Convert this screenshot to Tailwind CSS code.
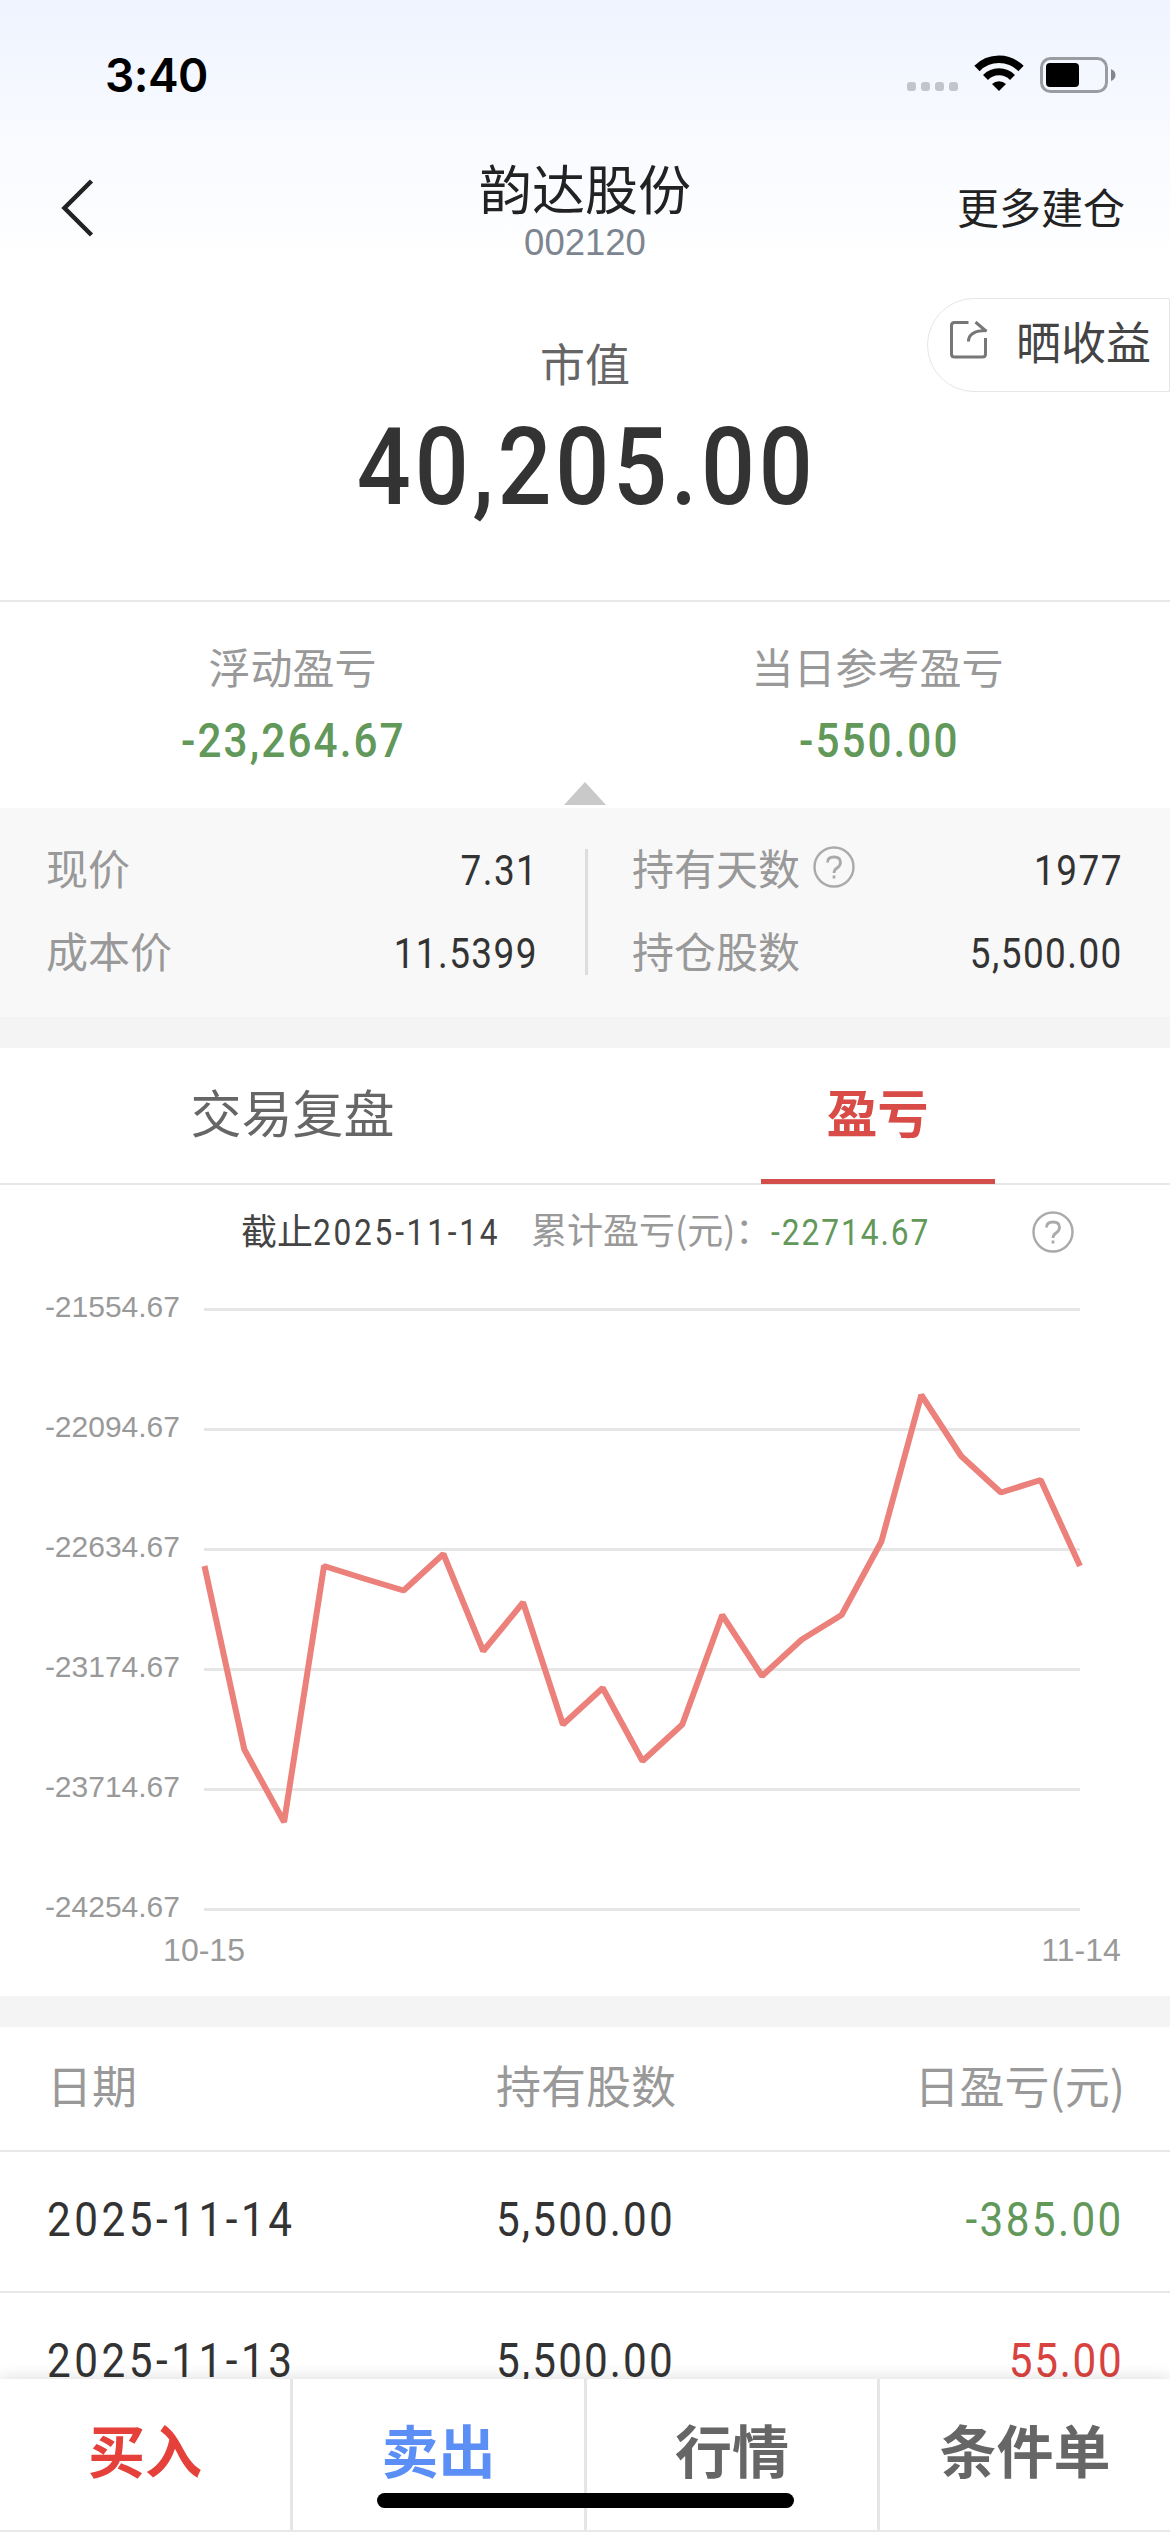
<!DOCTYPE html>
<html lang="zh-CN">
<head>
    <meta charset="UTF-8">
    <meta name="viewport" content="width=device-width, initial-scale=1.0">
    <title>韵达股份 - 持仓详情</title>
    <script src="https://cdn.jsdelivr.net/npm/@tailwindcss/browser@4"></script>
</head>
<body class="bg-white font-['Noto_Sans_CJK_SC',sans-serif]">
<div class="relative w-[1170px] h-[2532px] overflow-hidden bg-white">

    <header class="h-[267px] bg-linear-to-b from-[#eff4ff] via-[#f8faff] to-white">
        <!-- status bar -->
        <div class="flex h-[149px] items-center justify-between pl-[105px] pr-[54px]">
            <span class="font-['Inter',sans-serif] text-[46px] leading-[46px] font-semibold tracking-[-0.5px] text-black">3:40</span>
            <div class="flex items-center">
                <div class="mt-6 flex gap-[5px]">
                    <span class="h-[9px] w-[9px] rounded-[3px] bg-[#c4c5cb]"></span>
                    <span class="h-[9px] w-[9px] rounded-[3px] bg-[#c4c5cb]"></span>
                    <span class="h-[9px] w-[9px] rounded-[3px] bg-[#c4c5cb]"></span>
                    <span class="h-[9px] w-[9px] rounded-[3px] bg-[#c4c5cb]"></span>
                </div>
                <svg class="mr-4 mb-[2px] ml-4 h-[37px] w-[50px]" viewBox="0 0 50 37" fill="none">
                    <path d="M3 13.5 A31 31 0 0 1 47 13.5" stroke="#000" stroke-width="7.5" />
                    <path d="M11.5 22.5 A19 19 0 0 1 38.5 22.5" stroke="#000" stroke-width="7" />
                    <path d="M25 36 L18 29 A10 10 0 0 1 32 29 Z" fill="#000" />
                </svg>
                <svg class="h-[36px] w-[76px]" viewBox="0 0 76 36" fill="none">
                    <rect x="1.5" y="1.5" width="65" height="33" rx="9" stroke="#9b9ca2" stroke-width="3" />
                    <rect x="6" y="6" width="33" height="24" rx="4" fill="#000" />
                    <path d="M71 12 Q75.5 14 75.5 18 Q75.5 22 71 24 Z" fill="#85868b" />
                </svg>
            </div>
        </div>
        <!-- nav -->
        <div class="grid h-[118px] grid-cols-3">
            <div class="flex items-center pl-[60px]">
                <svg class="h-[58px] w-9" viewBox="0 0 36 58" fill="none">
                    <path d="M31.5 2 L4.5 29 L31.5 56" stroke="#222" stroke-width="4.5" />
                </svg>
            </div>
            <div class="pt-[8px] text-center">
                <h1 class="text-[53px] leading-[60px] text-[#222]">韵达股份</h1>
                <p class="mt-2 font-['Liberation_Sans',sans-serif] text-[36.5px] leading-9 text-[#7c8590]">002120</p>
            </div>
            <div class="flex items-center justify-end pr-[45px] pb-1 text-[42px] leading-[60px] text-[#222]">更多建仓</div>
        </div>
    </header>

    <section class="relative h-[335px] border-b-2 border-[#e8e8e8] pt-[66px] text-center">
        <p class="text-[45px] leading-[60px] text-[#666]">市值</p>
        <p class="mt-5 scale-x-[0.88] pl-1 font-['Roboto',sans-serif] text-[108px] leading-[108px] font-medium tracking-[4.3px] text-[#333]">40,205.00</p>
        <button class="absolute top-[31px] right-0 flex h-[94px] w-[243px] items-center rounded-l-full border border-[#e6e6e6] bg-white pl-[22px]">
            <svg class="mb-[11px] h-[38px] w-[38px]" viewBox="0 0 38 38" fill="none" stroke="#777" stroke-width="3">
                <path d="M18.500 1.500 H4.500 Q1.500 1.500 1.500 4.500 V33 Q1.500 36 4.500 36 H32.500 Q35.500 36 35.500 33 V17" />
                <path d="M18.500 20.500 Q18.500 9.500 36.500 9.500 M25.500 1 L36.500 10.500" />
            </svg>
            <span class="ml-[28px] pb-2 text-[45px] leading-[60px] text-[#444]">晒收益</span>
        </button>
    </section>

    <section class="relative grid h-[206px] grid-cols-2 pt-9 text-center">
        <div>
            <p class="text-[42px] leading-[56px] text-[#999]">浮动盈亏</p>
            <p class="mt-[19px] scale-x-[0.88] pl-[2px] font-['Roboto',sans-serif] text-5xl leading-[56px] font-medium tracking-[2.4px] text-[#62985a]">-23,264.67</p>
        </div>
        <div>
            <p class="text-[42px] leading-[56px] text-[#999]">当日参考盈亏</p>
            <p class="mt-[19px] scale-x-[0.88] pl-[4px] font-['Roboto',sans-serif] text-5xl leading-[56px] font-medium tracking-[2.3px] text-[#62985a]">-550.00</p>
        </div>
        <svg class="absolute bottom-[3px] left-[564px] h-[23px] w-[42px]" viewBox="0 0 42 23"><path d="M21 0 L42 23 H0 Z" fill="#c9c9c9" /></svg>
    </section>

    <section class="flex h-[209px] bg-[#f8f8f8]">
        <dl class="w-[585px] pt-[17px] pr-[47px] pl-[46px] text-[42px] leading-[83px]">
            <div class="flex h-[83px] items-baseline justify-between">
                <dt class="text-[#999]">现价</dt>
                <dd class="origin-right scale-x-[0.88] font-['Roboto',sans-serif] tracking-[1.6px] text-[#333]">7.31</dd>
            </div>
            <div class="flex h-[83px] items-baseline justify-between">
                <dt class="text-[#999]">成本价</dt>
                <dd class="origin-right scale-x-[0.88] font-['Roboto',sans-serif] tracking-[1.6px] text-[#333]">11.5399</dd>
            </div>
        </dl>
        <div class="mt-[41px] h-[126px] w-[3px] bg-[#ddd]"></div>
        <dl class="flex-1 pt-[17px] pr-[47px] pl-[44px] text-[42px] leading-[83px]">
            <div class="flex h-[83px] items-baseline">
                <dt class="text-[#999]">持有天数</dt>
                <svg class="ml-[13px] h-[42px] w-[42px] self-center" viewBox="0 0 42 42" fill="none" stroke="#aaa" stroke-width="2.400">
                    <circle cx="21" cy="21" r="19.500" />
                    <path d="M14.500 16.500 Q14.500 11 21 11 Q27.500 11 27.500 16.500 Q27.500 19.500 24 22 Q21 24 21 27 M21 29.500 V32.500" stroke-width="2.800" />
                </svg>
                <dd class="ml-auto origin-right scale-x-[0.88] font-['Roboto',sans-serif] tracking-[1.6px] text-[#333]">1977</dd>
            </div>
            <div class="flex h-[83px] items-baseline">
                <dt class="text-[#999]">持仓股数</dt>
                <dd class="ml-auto origin-right scale-x-[0.88] font-['Roboto',sans-serif] tracking-[1.6px] text-[#333]">5,500.00</dd>
            </div>
        </dl>
    </section>
    <div class="h-[31px] bg-[#f4f4f4]"></div>

    <!-- tabs -->
    <nav class="grid h-[137px] grid-cols-2 border-b-2 border-[#e8e8e8] text-center text-[51px] leading-[126px]">
        <a class="text-[#666]">交易复盘</a>
        <a class="flex flex-col items-center font-bold text-[#d94b47]">
            盈亏
            <span class="mt-[5px] h-[5px] w-[234px] shrink-0 bg-[#d34d4b]"></span>
        </a>
    </nav>

    <section class="h-[811px]">
        <div class="flex h-[94px] items-center pt-[2px] pl-[241px] text-4xl leading-[50px]">
            <span class="w-[290px] whitespace-nowrap font-['Roboto','Noto_Sans_CJK_SC',sans-serif] text-[#444]">截止<span class="inline-block origin-left scale-x-[0.88] tracking-[3.1px]">2025-11-14</span></span>
            <span class="w-[240px] pb-[10px] whitespace-nowrap text-[#999]">累计盈亏(元)：</span>
            <span class="origin-left scale-x-[0.88] font-['Roboto',sans-serif] tracking-[2.2px] text-[#62985a]">-22714.67</span>
            <svg class="mr-[96px] mb-[2px] ml-auto h-[42px] w-[42px]" viewBox="0 0 42 42" fill="none" stroke="#aaa" stroke-width="2.400">
                <circle cx="21" cy="21" r="19.500" />
                <path d="M14.500 16.500 Q14.500 11 21 11 Q27.500 11 27.500 16.500 Q27.500 19.500 24 22 Q21 24 21 27 M21 29.500 V32.500" stroke-width="2.800" />
            </svg>
        </div>
        <svg class="h-[717px] w-[1170px]" viewBox="0 1279 1170 717" fill="none">
            <path d="M204 1309.500 H1080 M204 1429.500 H1080 M204 1549.500 H1080 M204 1669.500 H1080 M204 1789.500 H1080 M204 1909.500 H1080" stroke="#e6e6e6" stroke-width="3" />
            <g class="font-['Liberation_Sans',sans-serif] text-[30px]" fill="#999" text-anchor="end">
                <text x="180" y="1317">-21554.67</text>
                <text x="180" y="1437">-22094.67</text>
                <text x="180" y="1557">-22634.67</text>
                <text x="180" y="1677">-23174.67</text>
                <text x="180" y="1797">-23714.67</text>
                <text x="180" y="1917">-24254.67</text>
            </g>
            <g class="font-['Liberation_Sans',sans-serif] text-[32px]" fill="#999" text-anchor="middle">
                <text x="204" y="1961">10-15</text>
                <text x="1081" y="1961">11-14</text>
            </g>
            <polyline points="204.500,1566 244.300,1749.500 284.100,1822 324,1566 363.800,1578.500 403.600,1590.500 443.400,1554 483.200,1651 523.100,1602.500 562.900,1724.500 602.700,1688 642.500,1761 682.300,1724.500 722.200,1615 762,1676 801.800,1639.500 841.600,1615 881.400,1541.500 921.300,1395 961.100,1456 1000.900,1492.500 1040.700,1480 1080,1566" stroke="#ec807a" stroke-width="6" stroke-linejoin="bevel" />
        </svg>
    </section>
    <div class="h-[31px] bg-[#f4f4f4]"></div>

    <!-- daily list -->
    <section>
        <div class="flex h-[125px] border-b-2 border-[#e8e8e8] pr-[45px] pl-[47px] text-[45px] leading-[115px] text-[#999]">
            <span class="w-[449px]">日期</span>
            <span>持有股数</span>
            <span class="ml-auto">日盈亏(元)</span>
        </div>
        <div class="flex h-[141px] border-b-2 border-[#e8e8e8] pr-[46px] pl-[47px] font-['Roboto',sans-serif] text-5xl leading-[135px] text-[#333]">
            <span class="w-[449px] origin-left scale-x-[0.88] tracking-[4px]">2025-11-14</span>
            <span class="origin-left scale-x-[0.88] tracking-[2.4px]">5,500.00</span>
            <span class="ml-auto origin-right scale-x-[0.88] tracking-[2.7px] text-[#62985a]">-385.00</span>
        </div>
        <div class="flex h-[141px] pr-[46px] pl-[47px] font-['Roboto',sans-serif] text-5xl leading-[135px] text-[#333]">
            <span class="w-[449px] origin-left scale-x-[0.88] tracking-[4px]">2025-11-13</span>
            <span class="origin-left scale-x-[0.88] tracking-[2.4px]">5,500.00</span>
            <span class="ml-auto origin-right scale-x-[0.88] tracking-[2px] text-[#d9433f]">55.00</span>
        </div>
    </section>

    <!-- bottom actions -->
    <footer class="absolute bottom-0 left-0 grid h-[153px] w-full grid-cols-[293px_294px_293px_1fr] border-b-2 border-[#e8e8e8] bg-white text-center text-[57px] leading-[139px] font-bold shadow-[0_-2px_14px_rgba(0,0,0,0.12)]">
        <a class="border-r-3 border-[#e6e6e6] text-[#e5403a]">买入</a>
        <a class="border-r-3 border-[#e6e6e6] text-[#5b8ff5]">卖出</a>
        <a class="border-r-3 border-[#e6e6e6] text-[#666]">行情</a>
        <a class="text-[#666]">条件单</a>
        <div class="absolute bottom-[22px] left-[377px] h-[15px] w-[417px] rounded-full bg-black"></div>
    </footer>
</div>
</body>
</html>
